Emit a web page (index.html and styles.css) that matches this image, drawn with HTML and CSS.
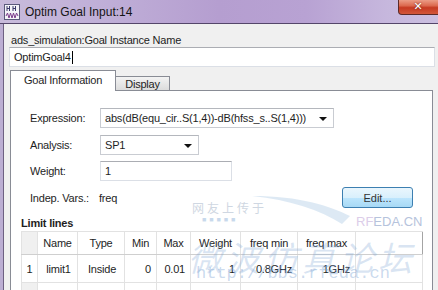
FILE: index.html
```html
<!DOCTYPE html>
<html lang="en">
<head>
  <meta charset="UTF-8" /><meta name="viewport" content="width=device-width, initial-scale=1.0" />
  <title>Optim Goal Input:14</title>
  <link rel="stylesheet" href="styles.css">
</head>
<body>
  <div class="window">
    <div class="titlebar">
      <svg class="app-icon" viewBox="0 0 16 16" width="16" height="16">
        <rect x="0.5" y="0.5" width="15" height="15" fill="#f4f4f8" stroke="#5a5a7a"/>
        <path d="M3 2v5M3 4.5h2.5M5.5 2v5M9 2v5M9 4.5h2.5M11.5 2v5" stroke="#3b3b6b" stroke-width="1" fill="none"/>
        <path d="M2 12l1.5-3 1.5 5 1.5-5 1.5 5 1.5-5 1.5 5 1.5-5 1.5 3" stroke="#7a3a8a" stroke-width="1" fill="none"/>
      </svg>
      <span class="title">Optim Goal Input:14</span>
      <div class="close-btn">&#x2715;</div>
    </div>

    <div class="client">
      <div class="name-label">ads_simulation:Goal Instance Name</div>
      <div class="textbox name-box">OptimGoal4<span class="caret"></span></div>

      <div class="tabs">
        <div class="tab active">Goal Information</div>
        <div class="tab">Display</div>
      </div>

      <div class="panel">
        <div class="form-row">
          <span class="field-label">Expression:</span>
          <div class="combo expr-combo">abs(dB(equ_cir..S(1,4))-dB(hfss_s..S(1,4)))</div>
        </div>
        <div class="form-row">
          <span class="field-label">Analysis:</span>
          <div class="combo analysis-combo">SP1</div>
        </div>
        <div class="form-row">
          <span class="field-label">Weight:</span>
          <div class="textbox weight-box">1</div>
        </div>
        <div class="form-row indep-row">
          <span class="field-label indep-label">Indep. Vars.:</span>
          <span>freq</span>
          <button class="edit-btn">Edit...</button>
        </div>

        <div class="limit-title">Limit lines</div>
        <table class="grid">
          <colgroup>
            <col style="width:16px"><col style="width:40px"><col style="width:47px"><col style="width:32px">
            <col style="width:34px"><col style="width:50px"><col style="width:57px"><col style="width:58px"><col>
          </colgroup>
          <thead>
            <tr>
              <th class="row-head"></th>
              <th>Name</th><th>Type</th><th>Min</th><th>Max</th>
              <th>Weight</th><th>freq min</th><th>freq max</th><th class="filler"></th>
            </tr>
          </thead>
          <tbody>
            <tr class="data-row">
              <td class="row-num">1</td>
              <td class="center">limit1</td>
              <td class="center">Inside</td>
              <td class="num">0</td>
              <td class="num">0.01</td>
              <td class="num">1</td>
              <td class="num">0.8GHz</td>
              <td class="num">1GHz</td>
              <td></td>
            </tr>
            <tr class="new-row">
              <td class="row-head"></td>
              <td></td><td></td><td></td><td></td><td></td><td></td><td></td><td></td>
            </tr>
          </tbody>
        </table>
      </div>
    </div>

    <div class="watermark">
      <svg class="wm-swoosh" viewBox="0 0 120 40" width="120" height="40">
        <path d="M2 6 C40 10 70 20 92 34 L100 26 C80 16 50 6 2 6 Z" fill="#cfe0ef" opacity="0.7"/>
      </svg>
      <span class="wm-upload">网友上传于</span>
      <span class="wm-dots">■■■■■</span>
      <span class="wm-site"><span class="wm-rf">RF</span>EDA.CN</span>
      <span class="wm-forum">微波仿真论坛</span>
      <span class="wm-url">http://bbs.rfeda.cn</span>
    </div>
  </div>
</body>
</html>
```

FILE: styles.css
```css
body { margin:0; font-family:"Liberation Sans", Arial, sans-serif; font-size:11px; letter-spacing:-0.2px; color:#1e1e1e; background:#f0f0f0; overflow:hidden; }
.window { position:relative; width:438px; height:290px; display:flex; flex-direction:column; background:#bcaed3; overflow:hidden; }

/* title bar */
.titlebar { flex:none; height:23px; display:flex; align-items:center; border-bottom:1px solid #54466a;
  background:linear-gradient(to right, #c8bbdb 0%, #bfaed7 25%, #b59ed0 50%, #b8a2d3 70%, #c6b7dd 88%, #cbbfe0 100%); }
.app-icon { flex:none; margin:0 5px 0 4px; }
.title { font-size:12px; letter-spacing:0; color:#141414; }
.close-btn { margin-left:auto; margin-right:-8px; align-self:flex-start; width:38px; height:14px; border:1px solid #5c2a28; border-top:none;
  border-radius:0 0 4px 4px; color:#fff; font-family:"DejaVu Sans", sans-serif; font-size:11px; font-weight:bold; text-align:center; line-height:14px; padding-right:8px;
  background:linear-gradient(#eb9c86 0%, #dc6a50 40%, #c63a22 55%, #d2573a 100%); text-shadow:0 0 2px #5a1810; }

/* client area */
.client { flex:1; display:flex; flex-direction:column; margin-left:3px; border-left:1px solid #6e6082; background:#f0f0f0; padding:9px 0 0 5px; min-height:0; }
.name-label { padding-left:2px; line-height:14px; height:14px; }
.textbox { background:#fff; border:1px solid #dbdfe6; border-top-color:#abadb3; box-sizing:border-box; height:20px; line-height:18px; padding-left:4px; }
.name-box { width:426px; display:flex; align-items:center; }
.caret { display:inline-block; width:1px; height:13px; background:#000; margin-left:1px; }

/* tabs */
.tabs { display:flex; align-items:flex-end; height:20px; margin-top:3px; margin-left:1px; position:relative; z-index:1; }
.tab { box-sizing:border-box; border:1px solid #898c95; border-bottom:none; text-align:center; }
.tab.active { width:106px; height:21px; margin-bottom:-1px; background:#fff; line-height:19px; }
.tab:not(.active) { width:54px; height:14px; border-left:none; line-height:14px; background:linear-gradient(#f3f3f3, #dcdcdc); }

.panel { flex:1; margin-left:1px; width:423px; box-sizing:border-box; border:1px solid #898c95; background:#fff; padding:17px 10px 0; }
.form-row { display:flex; align-items:center; padding-left:9px; margin-bottom:6px; }
.form-row:first-child { margin-bottom:7px; }
.field-label { width:70px; flex:none; }
.indep-label { width:69px; }
.combo { position:relative; box-sizing:border-box; height:20px; line-height:18px; padding-left:4px; border:1px solid #c9ccd2; border-top-color:#b4b7bd; background:#fff; white-space:nowrap; }
.combo::after { content:""; position:absolute; right:6px; top:8px; border-left:4px solid transparent; border-right:4px solid transparent; border-top:4px solid #111; }
.expr-combo { width:234px; }
.analysis-combo { width:99px; }
.weight-box { width:132px; }
.indep-row { margin-top:1px; }
.edit-btn { margin-left:auto; margin-right:9px; width:71px; height:21px; border:1px solid #3c7fb1; border-radius:3px; font:inherit; color:#333;
  background:linear-gradient(#eaf6fd 0%, #d9f0fc 50%, #bee6fd 50%, #a7d9f5 100%); padding:0; }

.limit-title { font-weight:bold; margin-top:8px; line-height:15px; }

/* grid */
.grid { width:402px; border-collapse:collapse; table-layout:fixed; border:1px solid #a4a4a4; background:#fff; }
.grid th, .grid td { border:1px solid #e2e2e2; padding:0 4px; white-space:nowrap; overflow:hidden; }
.grid th { height:22px; font-weight:normal; text-align:center; border-bottom-color:#cfcfcf; }
.grid th.filler { border-right:none; }
.grid .row-head { background:#f0f0f0; }
.data-row td { height:27px; }
.grid .row-num { text-align:center; padding:0; }
.grid .center { text-align:center; padding:0 0 0 2px; }
.grid .num { text-align:right; padding-right:5px; }
.new-row td { height:26px; }

/* site watermark */
.watermark { position:absolute; inset:0; pointer-events:none; }
.wm-swoosh { position:absolute; left:250px; top:190px; }
.wm-upload { position:absolute; left:192px; top:199px; font-family:"Noto Sans CJK SC", sans-serif; font-size:12px; letter-spacing:3px; color:#cfd7e2; }
.wm-dots { position:absolute; left:202px; top:216px; font-size:7px; letter-spacing:3px; color:#c8d9ec; }
.wm-site { position:absolute; left:356px; top:214px; font-family:"Liberation Sans", sans-serif; font-size:13px; letter-spacing:0; color:#b6c3dc; }
.wm-rf { color:#dccde9; }
.wm-forum { position:absolute; left:188px; top:232px; font-family:"Noto Sans CJK SC", sans-serif; font-size:34px; letter-spacing:4px; color:rgba(120,160,210,0.28); font-style:italic; }
.wm-url { position:absolute; left:196px; top:264px; font-family:"Liberation Mono", monospace; font-size:17px; letter-spacing:0; color:rgba(120,160,210,0.4); }
```
